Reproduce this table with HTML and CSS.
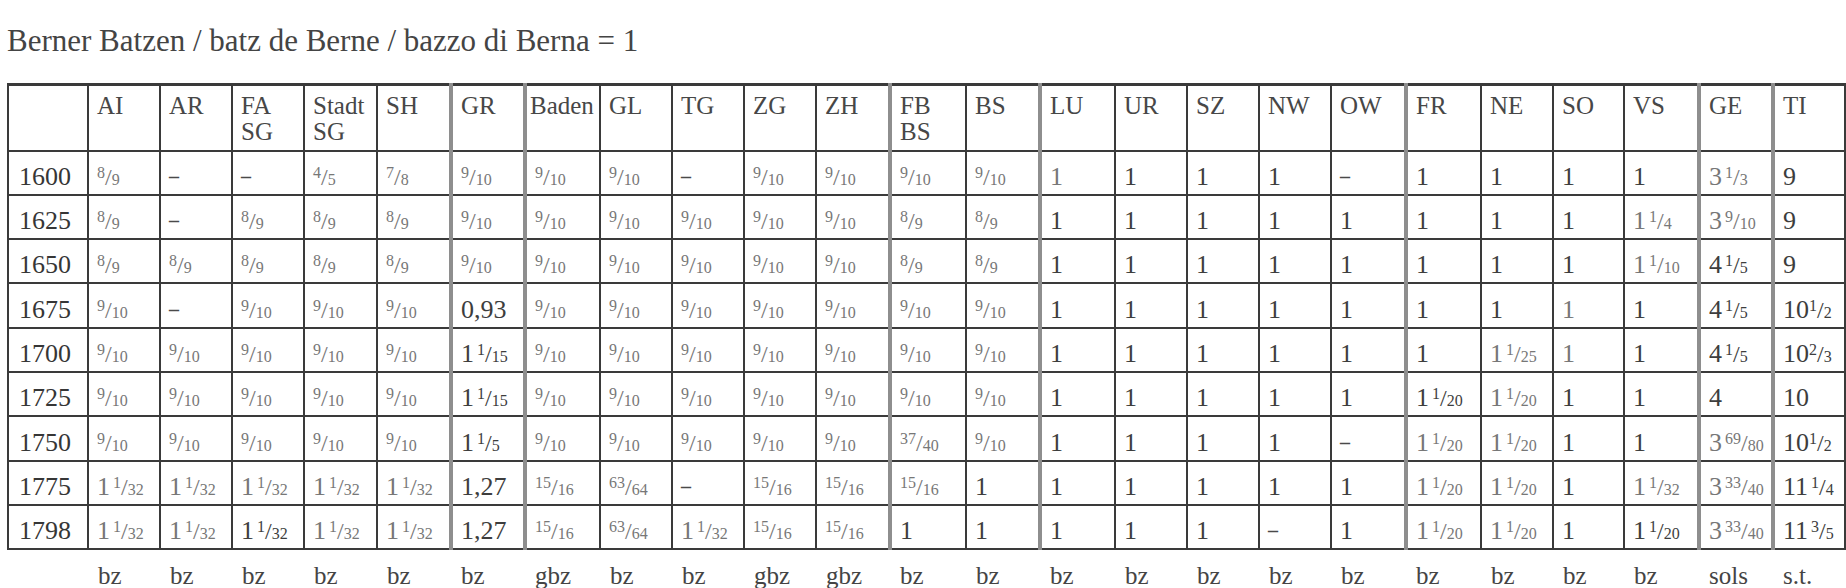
FILE: index.html
```html
<!DOCTYPE html>
<html lang="de">
<head>
<meta charset="utf-8">
<title>Berner Batzen</title>
<link rel="stylesheet" href="styles.css">
</head>
<body>
<h1 class="title">Berner Batzen / batz de Berne / bazzo di Berna = 1</h1>
<table class="rates">
<colgroup>
<col style="width:80px"><col style="width:72px"><col style="width:72px"><col style="width:72px"><col style="width:73px"><col style="width:74px"><col style="width:74px"><col style="width:75px"><col style="width:72px"><col style="width:72px"><col style="width:72px"><col style="width:74px"><col style="width:76px"><col style="width:74px"><col style="width:75px"><col style="width:72px"><col style="width:72px"><col style="width:72px"><col style="width:75px"><col style="width:75px"><col style="width:72px"><col style="width:71px"><col style="width:75px"><col style="width:74px"><col style="width:72px">
</colgroup>
<thead>
<tr><th></th><th>AI</th><th>AR</th><th>FA<br>SG</th><th>Stadt<br>SG</th><th>SH</th><th class="dbl">GR</th><th class="dbl tight">Baden</th><th>GL</th><th>TG</th><th>ZG</th><th>ZH</th><th class="dbl">FB<br>BS</th><th>BS</th><th class="dbl">LU</th><th>UR</th><th>SZ</th><th>NW</th><th>OW</th><th class="dbl">FR</th><th>NE</th><th>SO</th><th>VS</th><th class="dbl">GE</th><th class="dbl">TI</th></tr>
</thead>
<tbody>
<tr><th class="yr">1600</th>
<td class="g"><span class="fr"><sup>8</sup>/<sub>9</sub></span></td>
<td><span class="dash">–</span></td>
<td><span class="dash">–</span></td>
<td class="g"><span class="fr"><sup>4</sup>/<sub>5</sub></span></td>
<td class="g"><span class="fr"><sup>7</sup>/<sub>8</sub></span></td>
<td class="g dbl"><span class="fr"><sup>9</sup>/<sub>10</sub></span></td>
<td class="g dbl"><span class="fr"><sup>9</sup>/<sub>10</sub></span></td>
<td class="g"><span class="fr"><sup>9</sup>/<sub>10</sub></span></td>
<td><span class="dash">–</span></td>
<td class="g"><span class="fr"><sup>9</sup>/<sub>10</sub></span></td>
<td class="g"><span class="fr"><sup>9</sup>/<sub>10</sub></span></td>
<td class="g dbl"><span class="fr"><sup>9</sup>/<sub>10</sub></span></td>
<td class="g"><span class="fr"><sup>9</sup>/<sub>10</sub></span></td>
<td class="g dbl">1</td><td>1</td><td>1</td><td>1</td><td><span class="dash">–</span></td>
<td class="dbl">1</td><td>1</td><td>1</td><td>1</td>
<td class="g dbl">3<span class="fr m"><sup>1</sup>/<sub>3</sub></span></td>
<td class="dbl">9</td></tr>

<tr><th class="yr">1625</th>
<td class="g"><span class="fr"><sup>8</sup>/<sub>9</sub></span></td>
<td><span class="dash">–</span></td>
<td class="g"><span class="fr"><sup>8</sup>/<sub>9</sub></span></td>
<td class="g"><span class="fr"><sup>8</sup>/<sub>9</sub></span></td>
<td class="g"><span class="fr"><sup>8</sup>/<sub>9</sub></span></td>
<td class="g dbl"><span class="fr"><sup>9</sup>/<sub>10</sub></span></td>
<td class="g dbl"><span class="fr"><sup>9</sup>/<sub>10</sub></span></td>
<td class="g"><span class="fr"><sup>9</sup>/<sub>10</sub></span></td>
<td class="g"><span class="fr"><sup>9</sup>/<sub>10</sub></span></td>
<td class="g"><span class="fr"><sup>9</sup>/<sub>10</sub></span></td>
<td class="g"><span class="fr"><sup>9</sup>/<sub>10</sub></span></td>
<td class="g dbl"><span class="fr"><sup>8</sup>/<sub>9</sub></span></td>
<td class="g"><span class="fr"><sup>8</sup>/<sub>9</sub></span></td>
<td class="dbl">1</td><td>1</td><td>1</td><td>1</td><td>1</td>
<td class="dbl">1</td><td>1</td><td>1</td>
<td class="g">1<span class="fr m"><sup>1</sup>/<sub>4</sub></span></td>
<td class="g dbl">3<span class="fr m"><sup>9</sup>/<sub>10</sub></span></td>
<td class="dbl">9</td></tr>

<tr><th class="yr">1650</th>
<td class="g"><span class="fr"><sup>8</sup>/<sub>9</sub></span></td>
<td class="g"><span class="fr"><sup>8</sup>/<sub>9</sub></span></td>
<td class="g"><span class="fr"><sup>8</sup>/<sub>9</sub></span></td>
<td class="g"><span class="fr"><sup>8</sup>/<sub>9</sub></span></td>
<td class="g"><span class="fr"><sup>8</sup>/<sub>9</sub></span></td>
<td class="g dbl"><span class="fr"><sup>9</sup>/<sub>10</sub></span></td>
<td class="g dbl"><span class="fr"><sup>9</sup>/<sub>10</sub></span></td>
<td class="g"><span class="fr"><sup>9</sup>/<sub>10</sub></span></td>
<td class="g"><span class="fr"><sup>9</sup>/<sub>10</sub></span></td>
<td class="g"><span class="fr"><sup>9</sup>/<sub>10</sub></span></td>
<td class="g"><span class="fr"><sup>9</sup>/<sub>10</sub></span></td>
<td class="g dbl"><span class="fr"><sup>8</sup>/<sub>9</sub></span></td>
<td class="g"><span class="fr"><sup>8</sup>/<sub>9</sub></span></td>
<td class="dbl">1</td><td>1</td><td>1</td><td>1</td><td>1</td>
<td class="dbl">1</td><td>1</td><td>1</td>
<td class="g">1<span class="fr m"><sup>1</sup>/<sub>10</sub></span></td>
<td class="dbl">4<span class="fr m"><sup>1</sup>/<sub>5</sub></span></td>
<td class="dbl">9</td></tr>

<tr><th class="yr">1675</th>
<td class="g"><span class="fr"><sup>9</sup>/<sub>10</sub></span></td>
<td><span class="dash">–</span></td>
<td class="g"><span class="fr"><sup>9</sup>/<sub>10</sub></span></td>
<td class="g"><span class="fr"><sup>9</sup>/<sub>10</sub></span></td>
<td class="g"><span class="fr"><sup>9</sup>/<sub>10</sub></span></td>
<td class="dbl">0,93</td>
<td class="g dbl"><span class="fr"><sup>9</sup>/<sub>10</sub></span></td>
<td class="g"><span class="fr"><sup>9</sup>/<sub>10</sub></span></td>
<td class="g"><span class="fr"><sup>9</sup>/<sub>10</sub></span></td>
<td class="g"><span class="fr"><sup>9</sup>/<sub>10</sub></span></td>
<td class="g"><span class="fr"><sup>9</sup>/<sub>10</sub></span></td>
<td class="g dbl"><span class="fr"><sup>9</sup>/<sub>10</sub></span></td>
<td class="g"><span class="fr"><sup>9</sup>/<sub>10</sub></span></td>
<td class="dbl">1</td><td>1</td><td>1</td><td>1</td><td>1</td>
<td class="dbl">1</td><td>1</td><td class="g">1</td><td>1</td>
<td class="dbl">4<span class="fr m"><sup>1</sup>/<sub>5</sub></span></td>
<td class="dbl">10<span class="fr"><sup>1</sup>/<sub>2</sub></span></td></tr>

<tr><th class="yr">1700</th>
<td class="g"><span class="fr"><sup>9</sup>/<sub>10</sub></span></td>
<td class="g"><span class="fr"><sup>9</sup>/<sub>10</sub></span></td>
<td class="g"><span class="fr"><sup>9</sup>/<sub>10</sub></span></td>
<td class="g"><span class="fr"><sup>9</sup>/<sub>10</sub></span></td>
<td class="g"><span class="fr"><sup>9</sup>/<sub>10</sub></span></td>
<td class="dbl">1<span class="fr m"><sup>1</sup>/<sub>15</sub></span></td>
<td class="g dbl"><span class="fr"><sup>9</sup>/<sub>10</sub></span></td>
<td class="g"><span class="fr"><sup>9</sup>/<sub>10</sub></span></td>
<td class="g"><span class="fr"><sup>9</sup>/<sub>10</sub></span></td>
<td class="g"><span class="fr"><sup>9</sup>/<sub>10</sub></span></td>
<td class="g"><span class="fr"><sup>9</sup>/<sub>10</sub></span></td>
<td class="g dbl"><span class="fr"><sup>9</sup>/<sub>10</sub></span></td>
<td class="g"><span class="fr"><sup>9</sup>/<sub>10</sub></span></td>
<td class="dbl">1</td><td>1</td><td>1</td><td>1</td><td>1</td>
<td class="dbl">1</td>
<td class="g">1<span class="fr m"><sup>1</sup>/<sub>25</sub></span></td>
<td class="g">1</td><td>1</td>
<td class="dbl">4<span class="fr m"><sup>1</sup>/<sub>5</sub></span></td>
<td class="dbl">10<span class="fr"><sup>2</sup>/<sub>3</sub></span></td></tr>

<tr><th class="yr">1725</th>
<td class="g"><span class="fr"><sup>9</sup>/<sub>10</sub></span></td>
<td class="g"><span class="fr"><sup>9</sup>/<sub>10</sub></span></td>
<td class="g"><span class="fr"><sup>9</sup>/<sub>10</sub></span></td>
<td class="g"><span class="fr"><sup>9</sup>/<sub>10</sub></span></td>
<td class="g"><span class="fr"><sup>9</sup>/<sub>10</sub></span></td>
<td class="dbl">1<span class="fr m"><sup>1</sup>/<sub>15</sub></span></td>
<td class="g dbl"><span class="fr"><sup>9</sup>/<sub>10</sub></span></td>
<td class="g"><span class="fr"><sup>9</sup>/<sub>10</sub></span></td>
<td class="g"><span class="fr"><sup>9</sup>/<sub>10</sub></span></td>
<td class="g"><span class="fr"><sup>9</sup>/<sub>10</sub></span></td>
<td class="g"><span class="fr"><sup>9</sup>/<sub>10</sub></span></td>
<td class="g dbl"><span class="fr"><sup>9</sup>/<sub>10</sub></span></td>
<td class="g"><span class="fr"><sup>9</sup>/<sub>10</sub></span></td>
<td class="dbl">1</td><td>1</td><td>1</td><td>1</td><td>1</td>
<td class="dbl">1<span class="fr m"><sup>1</sup>/<sub>20</sub></span></td>
<td class="g">1<span class="fr m"><sup>1</sup>/<sub>20</sub></span></td>
<td>1</td><td>1</td>
<td class="dbl">4</td>
<td class="dbl">10</td></tr>

<tr><th class="yr">1750</th>
<td class="g"><span class="fr"><sup>9</sup>/<sub>10</sub></span></td>
<td class="g"><span class="fr"><sup>9</sup>/<sub>10</sub></span></td>
<td class="g"><span class="fr"><sup>9</sup>/<sub>10</sub></span></td>
<td class="g"><span class="fr"><sup>9</sup>/<sub>10</sub></span></td>
<td class="g"><span class="fr"><sup>9</sup>/<sub>10</sub></span></td>
<td class="dbl">1<span class="fr m"><sup>1</sup>/<sub>5</sub></span></td>
<td class="g dbl"><span class="fr"><sup>9</sup>/<sub>10</sub></span></td>
<td class="g"><span class="fr"><sup>9</sup>/<sub>10</sub></span></td>
<td class="g"><span class="fr"><sup>9</sup>/<sub>10</sub></span></td>
<td class="g"><span class="fr"><sup>9</sup>/<sub>10</sub></span></td>
<td class="g"><span class="fr"><sup>9</sup>/<sub>10</sub></span></td>
<td class="g dbl"><span class="fr"><sup>37</sup>/<sub>40</sub></span></td>
<td class="g"><span class="fr"><sup>9</sup>/<sub>10</sub></span></td>
<td class="dbl">1</td><td>1</td><td>1</td><td>1</td><td><span class="dash">–</span></td>
<td class="g dbl">1<span class="fr m"><sup>1</sup>/<sub>20</sub></span></td>
<td class="g">1<span class="fr m"><sup>1</sup>/<sub>20</sub></span></td>
<td>1</td><td>1</td>
<td class="g dbl">3<span class="fr m"><sup>69</sup>/<sub>80</sub></span></td>
<td class="dbl">10<span class="fr"><sup>1</sup>/<sub>2</sub></span></td></tr>

<tr><th class="yr">1775</th>
<td class="g">1<span class="fr m"><sup>1</sup>/<sub>32</sub></span></td>
<td class="g">1<span class="fr m"><sup>1</sup>/<sub>32</sub></span></td>
<td class="g">1<span class="fr m"><sup>1</sup>/<sub>32</sub></span></td>
<td class="g">1<span class="fr m"><sup>1</sup>/<sub>32</sub></span></td>
<td class="g">1<span class="fr m"><sup>1</sup>/<sub>32</sub></span></td>
<td class="dbl">1,27</td>
<td class="g dbl"><span class="fr"><sup>15</sup>/<sub>16</sub></span></td>
<td class="g"><span class="fr"><sup>63</sup>/<sub>64</sub></span></td>
<td><span class="dash">–</span></td>
<td class="g"><span class="fr"><sup>15</sup>/<sub>16</sub></span></td>
<td class="g"><span class="fr"><sup>15</sup>/<sub>16</sub></span></td>
<td class="g dbl"><span class="fr"><sup>15</sup>/<sub>16</sub></span></td>
<td>1</td>
<td class="dbl">1</td><td>1</td><td>1</td><td>1</td><td>1</td>
<td class="g dbl">1<span class="fr m"><sup>1</sup>/<sub>20</sub></span></td>
<td class="g">1<span class="fr m"><sup>1</sup>/<sub>20</sub></span></td>
<td>1</td>
<td class="g">1<span class="fr m"><sup>1</sup>/<sub>32</sub></span></td>
<td class="g dbl">3<span class="fr m"><sup>33</sup>/<sub>40</sub></span></td>
<td class="dbl">11<span class="fr m"><sup>1</sup>/<sub>4</sub></span></td></tr>

<tr><th class="yr">1798</th>
<td class="g">1<span class="fr m"><sup>1</sup>/<sub>32</sub></span></td>
<td class="g">1<span class="fr m"><sup>1</sup>/<sub>32</sub></span></td>
<td>1<span class="fr m"><sup>1</sup>/<sub>32</sub></span></td>
<td class="g">1<span class="fr m"><sup>1</sup>/<sub>32</sub></span></td>
<td class="g">1<span class="fr m"><sup>1</sup>/<sub>32</sub></span></td>
<td class="dbl">1,27</td>
<td class="g dbl"><span class="fr"><sup>15</sup>/<sub>16</sub></span></td>
<td class="g"><span class="fr"><sup>63</sup>/<sub>64</sub></span></td>
<td class="g">1<span class="fr m"><sup>1</sup>/<sub>32</sub></span></td>
<td class="g"><span class="fr"><sup>15</sup>/<sub>16</sub></span></td>
<td class="g"><span class="fr"><sup>15</sup>/<sub>16</sub></span></td>
<td class="dbl">1</td>
<td>1</td>
<td class="dbl">1</td><td>1</td><td>1</td><td><span class="dash">–</span></td><td>1</td>
<td class="g dbl">1<span class="fr m"><sup>1</sup>/<sub>20</sub></span></td>
<td class="g">1<span class="fr m"><sup>1</sup>/<sub>20</sub></span></td>
<td>1</td>
<td>1<span class="fr m"><sup>1</sup>/<sub>20</sub></span></td>
<td class="g dbl">3<span class="fr m"><sup>33</sup>/<sub>40</sub></span></td>
<td class="dbl">11<span class="fr m"><sup>3</sup>/<sub>5</sub></span></td></tr>
</tbody>
</table>
<div class="units">
<span></span><span>bz</span><span>bz</span><span>bz</span><span>bz</span><span>bz</span><span>bz</span><span>gbz</span><span>bz</span><span>bz</span><span>gbz</span><span>gbz</span><span>bz</span><span>bz</span><span>bz</span><span>bz</span><span>bz</span><span>bz</span><span>bz</span><span>bz</span><span>bz</span><span>bz</span><span>bz</span><span>sols</span><span>s.t.</span>
</div>
</body>
</html>
```
FILE: styles.css
```css
* { box-sizing: border-box; }
html, body { background: #ffffff; }
body {
  margin: 0;
  padding: 0 0 0 7px;
  font-family: "Liberation Serif", "Times New Roman", serif;
  color: #3a3a3a;
}
.title {
  margin: 23px 0 0 0;
  font-size: 31px;
  line-height: 36px;
  font-weight: normal;
  color: #444444;
}
.rates {
  margin-top: 24px;
  border-collapse: collapse;
  table-layout: fixed;
  width: 1837px;
  font-size: 26px;
}
.rates th, .rates td {
  border: 2px solid #3a3a3a;
  padding: 0 0 3px 8px;
  text-align: left;
  vertical-align: bottom;
  line-height: 28px;
  font-weight: normal;
  white-space: nowrap;
  overflow: hidden;
  color: #3d3d3d;
}
.rates thead th {
  vertical-align: top;
  height: 66px;
  padding-top: 7px;
  padding-bottom: 0;
  font-size: 25px;
  line-height: 26px;
  color: #474747;
}
.rates thead tr th { border-top-width: 3px; }
.rates thead th.tight { padding-left: 3px; }
.rates tbody td, .rates tbody th { height: 44.3px; }
.rates .yr { color: #363636; padding-left: 10px; }
.rates .dbl { border-left: 4px solid #8e8e8e; }
.rates td.g { color: #777777; }
.fr { font-size: 24px; }
.fr.m { margin-left: 3px; }
.fr sup, .fr sub {
  font-size: 16px;
  line-height: 0;
}
.fr sup { vertical-align: 7px; }
.fr sub { vertical-align: baseline; }
.dash {
  display: inline-block;
  font-size: 20px;
  font-weight: bold;
  color: #4a4a4a;
  vertical-align: 2px;
}
.units {
  display: grid;
  grid-template-columns: 80px 72px 72px 72px 73px 74px 74px 75px 72px 72px 72px 74px 76px 74px 75px 72px 72px 72px 75px 75px 72px 71px 75px 74px 72px;
  margin-top: 11px;
  font-size: 25px;
  line-height: 30px;
  color: #444444;
}
.units span { padding-left: 11px; }
```
